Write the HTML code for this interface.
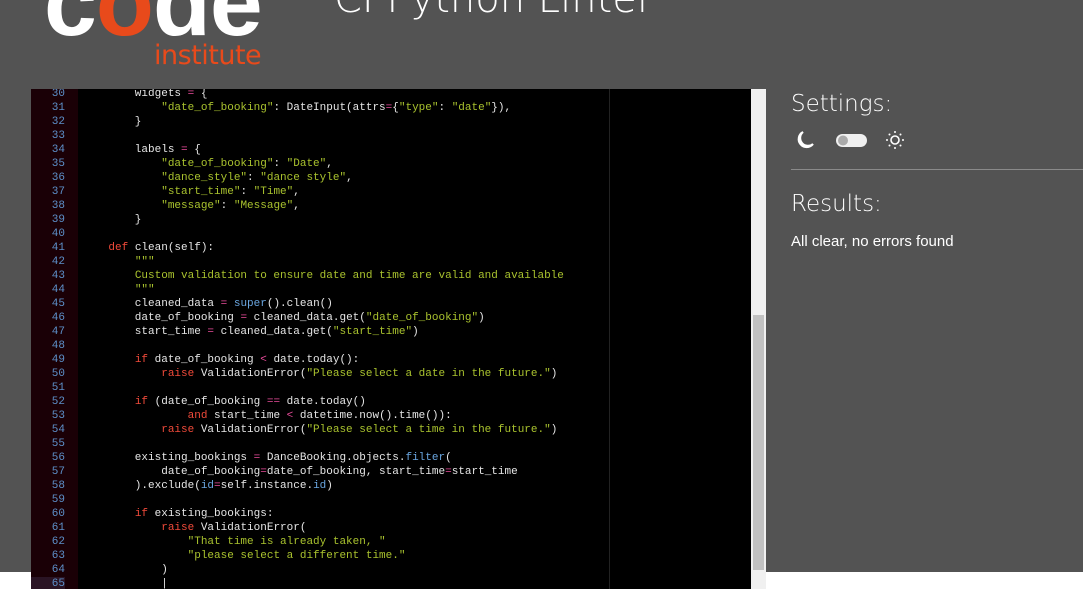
<!DOCTYPE html>
<html><head><meta charset="utf-8"><style>
html,body{margin:0;padding:0;}
body{width:1083px;height:605px;background:#fff;position:relative;overflow:hidden;font-family:"Liberation Sans",sans-serif;}
.top{position:absolute;left:0;top:0;width:1083px;height:572px;background:#535353;}
.logo{position:absolute;left:44px;top:-44px;font:bold 95px/95px "Liberation Sans",sans-serif;color:#fff;letter-spacing:-1px;}
.logo .o{color:#e84a1b}
.inst{position:absolute;left:154px;top:40px;font:27px "DejaVu Sans",sans-serif;color:#e84a1b;letter-spacing:-0.5px;}
.title{position:absolute;left:334px;top:-24px;font:300 40px "DejaVu Sans",sans-serif;color:#fff;}
.ed{position:absolute;left:31px;top:89px;width:720px;height:500px;background:#000;overflow:hidden;}
.gut{position:absolute;left:0;top:0;width:47px;height:500px;background:#1a0006;}
.margin{position:absolute;left:578px;top:0;width:1px;height:500px;background:#222;}
.lines{position:absolute;left:0;top:-2px;font:11px/14px "Liberation Mono",monospace;color:#e6e6e6;white-space:pre;}
.n{display:inline-block;width:34px;text-align:right;color:#5d8fc9;margin-right:17px;}
.s{color:#a9c22e}.k{color:#f04a3a}.o2{color:#ea4c9c}.b{color:#6aa6e0}
.cur{background:#2a1424}
.sb{position:absolute;left:751px;top:89px;width:15px;height:500px;background:#f0f0f0;}
.th{position:absolute;left:2px;top:226px;width:11px;height:255px;background:#c1c1c1;}
.right{position:absolute;left:791px;color:#fff;}
</style></head><body>
<div class="top"></div>
<div class="logo">c<span class="o">o</span>de</div>
<div class="inst">institute</div>
<div class="title">CI Python Linter</div>
<div class="ed"><div class="gut"></div><div class="margin"></div>
<div class="lines"><span class="n">30</span>        widgets <span class="o2">=</span> {
<span class="n">31</span>            <span class="s">"date_of_booking"</span>: DateInput(attrs<span class="o2">=</span>{<span class="s">"type"</span>: <span class="s">"date"</span>}),
<span class="n">32</span>        }
<span class="n">33</span>
<span class="n">34</span>        labels <span class="o2">=</span> {
<span class="n">35</span>            <span class="s">"date_of_booking"</span>: <span class="s">"Date"</span>,
<span class="n">36</span>            <span class="s">"dance_style"</span>: <span class="s">"dance style"</span>,
<span class="n">37</span>            <span class="s">"start_time"</span>: <span class="s">"Time"</span>,
<span class="n">38</span>            <span class="s">"message"</span>: <span class="s">"Message"</span>,
<span class="n">39</span>        }
<span class="n">40</span>
<span class="n">41</span>    <span class="k">def</span> clean(self):
<span class="n">42</span>        <span class="s">"""</span>
<span class="n">43</span>        <span class="s">Custom validation to ensure date and time are valid and available</span>
<span class="n">44</span>        <span class="s">"""</span>
<span class="n">45</span>        cleaned_data <span class="o2">=</span> <span class="b">super</span>().clean()
<span class="n">46</span>        date_of_booking <span class="o2">=</span> cleaned_data.get(<span class="s">"date_of_booking"</span>)
<span class="n">47</span>        start_time <span class="o2">=</span> cleaned_data.get(<span class="s">"start_time"</span>)
<span class="n">48</span>
<span class="n">49</span>        <span class="k">if</span> date_of_booking <span class="o2">&lt;</span> date.today():
<span class="n">50</span>            <span class="k">raise</span> ValidationError(<span class="s">"Please select a date in the future."</span>)
<span class="n">51</span>
<span class="n">52</span>        <span class="k">if</span> (date_of_booking <span class="o2">==</span> date.today()
<span class="n">53</span>                <span class="k">and</span> start_time <span class="o2">&lt;</span> datetime.now().time()):
<span class="n">54</span>            <span class="k">raise</span> ValidationError(<span class="s">"Please select a time in the future."</span>)
<span class="n">55</span>
<span class="n">56</span>        existing_bookings <span class="o2">=</span> DanceBooking.objects.<span class="b">filter</span>(
<span class="n">57</span>            date_of_booking<span class="o2">=</span>date_of_booking, start_time<span class="o2">=</span>start_time
<span class="n">58</span>        ).exclude(<span class="b">id</span><span class="o2">=</span>self.instance.<span class="b">id</span>)
<span class="n">59</span>
<span class="n">60</span>        <span class="k">if</span> existing_bookings:
<span class="n">61</span>            <span class="k">raise</span> ValidationError(
<span class="n">62</span>                <span class="s">"That time is already taken, "</span>
<span class="n">63</span>                <span class="s">"please select a different time."</span>
<span class="n">64</span>            )
<span class="n cur">65</span>            |</div></div>
<div class="sb"><div class="th"></div></div>
<div class="right" style="top:91px;font:300 23px 'DejaVu Sans',sans-serif;">Settings:</div>
<svg class="right" style="top:128px" width="120" height="24" viewBox="0 0 120 24">
<path d="M12 4 A8 8 0 1 0 22 16 A7 7 0 0 1 12 4Z" fill="none" stroke="#fff" stroke-width="2"/>
<rect x="45" y="6" width="31" height="13" rx="6.5" fill="#f0f0f0"/><circle cx="52" cy="12.5" r="5" fill="#aaa"/>
<circle cx="104" cy="12" r="4" fill="none" stroke="#fff" stroke-width="1.6"/>
<g fill="#fff"><circle cx="104" cy="4" r="1"/><circle cx="104" cy="20" r="1"/><circle cx="96" cy="12" r="1"/><circle cx="112" cy="12" r="1"/><circle cx="98.5" cy="6.5" r="1"/><circle cx="109.5" cy="6.5" r="1"/><circle cx="98.5" cy="17.5" r="1"/><circle cx="109.5" cy="17.5" r="1"/></g>
</svg>
<div style="position:absolute;left:791px;top:169px;width:292px;height:1px;background:#8a8a8a"></div>
<div class="right" style="top:191px;font:300 23px 'DejaVu Sans',sans-serif;">Results:</div>
<div class="right" style="top:233px;font:15px 'Liberation Sans',sans-serif;">All clear, no errors found</div>
</body></html>
